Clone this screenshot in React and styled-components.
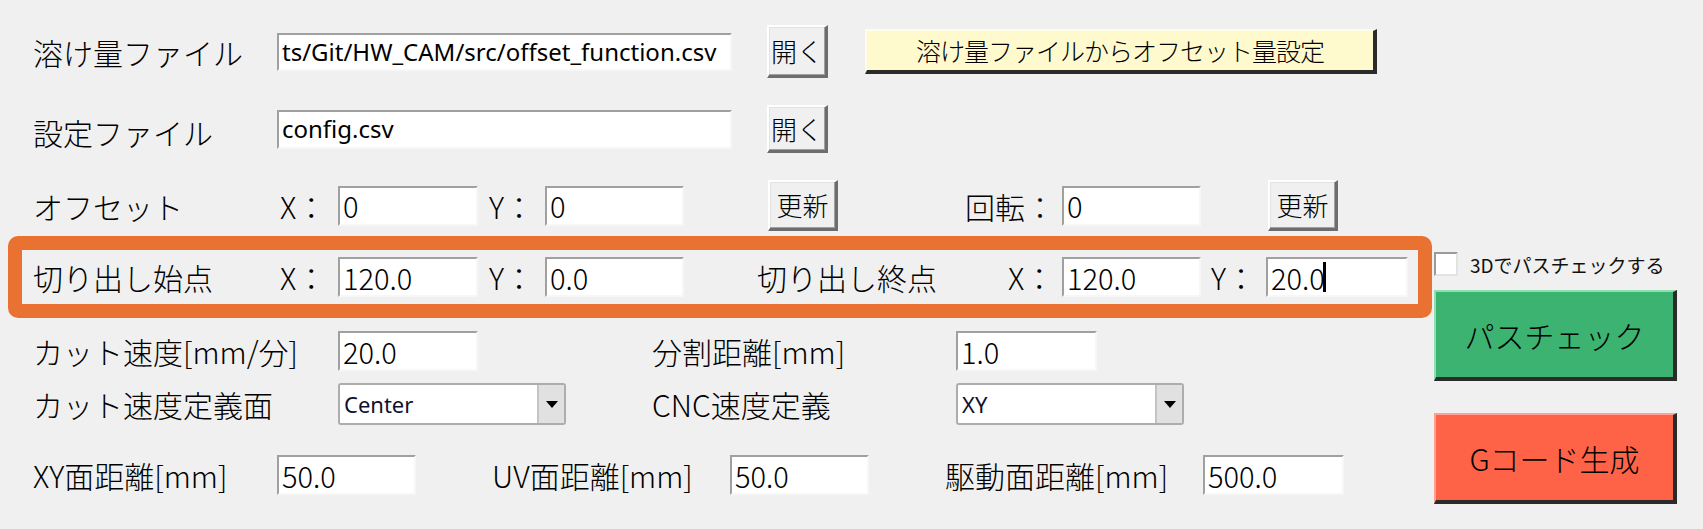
import styled, { createGlobalStyle } from 'styled-components';

const GlobalStyle = createGlobalStyle`
  html, body {
    margin: 0;
    padding: 0;
    background: #f0f0f0;
  }
  * {
    box-sizing: border-box;
  }
`;

const jp = `"Noto Sans CJK JP", "Noto Sans", sans-serif`;
const ui = `"Noto Sans", "Open Sans", "Noto Sans CJK JP", sans-serif`;

const Page = styled.div`
  display: flex;
  width: 1703px;
  height: 529px;
  background: #f0f0f0;
  overflow: hidden;
  font-family: ${jp};
  font-weight: 300;
  color: #000;
`;

const LeftPane = styled.div`
  width: 1432px;
  display: flex;
  flex-direction: column;
`;

const RightPane = styled.div`
  width: 243px;
  margin-left: 2px;
  padding-top: 252px;
  display: flex;
  flex-direction: column;
`;

const Row = styled.div`
  display: flex;
  align-items: center;
  height: ${(p) => p.$h}px;
  margin-top: ${(p) => p.$mt || 0}px;
  padding-left: ${(p) => (p.$pl === undefined ? 33 : p.$pl)}px;
  flex-shrink: 0;
`;

const Label = styled.div`
  width: ${(p) => p.$w}px;
  margin-left: ${(p) => p.$ml || 0}px;
  margin-top: ${(p) => p.$dy || 0}px;
  font-size: 30px;
  line-height: 1;
  white-space: nowrap;
  flex-shrink: 0;
`;

const TextBox = styled.div`
  width: ${(p) => p.$w}px;
  height: ${(p) => p.$h || 40}px;
  margin-left: ${(p) => p.$ml || 0}px;
  background: #fff;
  border-top: 2px solid #a0a0a0;
  border-left: 2px solid #a0a0a0;
  border-right: 2px solid #f7f7f7;
  border-bottom: 2px solid #f7f7f7;
  padding-left: 3px;
  display: flex;
  align-items: center;
  font-family: ${(p) => (p.$path ? ui : jp)};
  font-weight: ${(p) => (p.$path ? 400 : 300)};
  font-size: ${(p) => (p.$path ? 24 : 29)}px;
  line-height: 1;
  white-space: nowrap;
  overflow: hidden;
  flex-shrink: 0;
`;

const Caret = styled.span`
  display: inline-block;
  width: 3px;
  height: 30px;
  background: #000;
  margin-left: -2px;
`;

const SysButton = styled.div`
  width: ${(p) => p.$w}px;
  height: ${(p) => p.$h}px;
  margin-left: ${(p) => p.$ml || 0}px;
  background: #f0f0f0;
  border-style: solid;
  border-width: 2px 3px 3px 2px;
  border-color: #ffffff #6d6d6d #6d6d6d #ffffff;
  box-shadow: inset -1px -1px 0 #a0a0a0, inset 1px 1px 0 #e3e3e3;
  display: flex;
  align-items: center;
  justify-content: center;
  font-size: 26px;
  line-height: 1;
  flex-shrink: 0;
`;

const ColorButton = styled.div`
  width: ${(p) => p.$w}px;
  height: ${(p) => p.$h}px;
  margin-left: ${(p) => p.$ml || 0}px;
  margin-top: ${(p) => p.$mt || 0}px;
  background: ${(p) => p.$bg};
  border-style: solid;
  border-width: 2px 4px 4px 2px;
  border-color: ${(p) => p.$light} #2b2b2b #2b2b2b ${(p) => p.$light};
  display: flex;
  align-items: center;
  justify-content: center;
  font-size: ${(p) => p.$fs}px;
  letter-spacing: ${(p) => p.$ls || 0}px;
  line-height: 1;
  white-space: nowrap;
  flex-shrink: 0;
`;

const OrangeBox = styled.div`
  width: 1424px;
  height: 82px;
  margin-left: 8px;
  margin-top: 5px;
  border: 14px solid #e97132;
  border-radius: 10px;
  display: flex;
  align-items: center;
  flex-shrink: 0;
`;

const Combo = styled.div`
  width: ${(p) => p.$w}px;
  height: 42px;
  margin-left: ${(p) => p.$ml || 0}px;
  background: #fff;
  border: 2px solid #adadad;
  border-radius: 3px;
  display: flex;
  align-items: stretch;
  flex-shrink: 0;
`;

const ComboText = styled.div`
  flex: 1;
  display: flex;
  align-items: center;
  padding-left: 4px;
  font-family: ${ui};
  font-weight: 400;
  font-size: 22px;
  color: #101030;
`;

const ComboArrow = styled.div`
  width: 27px;
  background: #e1e1e1;
  border-left: 2px solid #c4c4c4;
  display: flex;
  align-items: center;
  justify-content: center;
`;

const CheckRow = styled.div`
  display: flex;
  align-items: center;
  height: 24px;
`;

const CheckBox = styled.div`
  width: 24px;
  height: 24px;
  background: #fff;
  border-top: 2px solid #9a9a9a;
  border-left: 2px solid #9a9a9a;
  border-right: 2px solid #e3e3e3;
  border-bottom: 2px solid #e3e3e3;
`;

const CheckLabel = styled.div`
  margin-left: 12px;
  font-size: 19px;
  font-weight: 400;
  line-height: 1;
  white-space: nowrap;
  color: #111;
`;

const Arrow = () => (
  <svg width="12" height="7" viewBox="0 0 12 7">
    <polygon points="0,0 12,0 6,7" fill="#000" />
  </svg>
);

const App = () => {
  return (
    <>
      <GlobalStyle />
      <Page>
        <LeftPane>
          <Row $h={53} $mt={25}>
            <Label $w={244}>溶け量ファイル</Label>
            <TextBox $w={455} $h={38} $path>ts/Git/HW_CAM/src/offset_function.csv</TextBox>
            <SysButton $w={61} $h={53} $ml={35}>開く</SysButton>
            <ColorButton $w={512} $h={45} $ml={37} $bg="#fffacd" $light="#fffde8" $fs={25} $ls={-1}>
              溶け量ファイルからオフセット量設定
            </ColorButton>
          </Row>

          <Row $h={48} $mt={27}>
            <Label $w={244} $dy={6}>設定ファイル</Label>
            <TextBox $w={455} $h={39} $path>config.csv</TextBox>
            <SysButton $w={61} $h={48} $ml={35}>開く</SysButton>
          </Row>

          <Row $h={51} $mt={27}>
            <Label $w={247}>オフセット</Label>
            <Label $w={58}>X：</Label>
            <TextBox $w={140}>0</TextBox>
            <Label $w={56} $ml={11}>Y：</Label>
            <TextBox $w={139}>0</TextBox>
            <SysButton $w={70} $h={51} $ml={84}>更新</SysButton>
            <Label $w={97} $ml={127}>回転：</Label>
            <TextBox $w={139}>0</TextBox>
            <SysButton $w={70} $h={51} $ml={67}>更新</SysButton>
          </Row>

          <OrangeBox>
            <Row $h={54} $pl={11}>
              <Label $w={247}>切り出し始点</Label>
              <Label $w={58}>X：</Label>
              <TextBox $w={140}>120.0</TextBox>
              <Label $w={56} $ml={11}>Y：</Label>
              <TextBox $w={139}>0.0</TextBox>
              <Label $w={251} $ml={73}>切り出し終点</Label>
              <Label $w={54}>X：</Label>
              <TextBox $w={139}>120.0</TextBox>
              <Label $w={55} $ml={10}>Y：</Label>
              <TextBox $w={142}>
                20.0<Caret />
              </TextBox>
            </Row>
          </OrangeBox>

          <Row $h={40} $mt={13}>
            <Label $w={305}>カット速度[mm/分]</Label>
            <TextBox $w={140}>20.0</TextBox>
            <Label $w={304} $ml={174}>分割距離[mm]</Label>
            <TextBox $w={141}>1.0</TextBox>
          </Row>

          <Row $h={42} $mt={12}>
            <Label $w={305}>カット速度定義面</Label>
            <Combo $w={228}>
              <ComboText>Center</ComboText>
              <ComboArrow>
                <Arrow />
              </ComboArrow>
            </Combo>
            <Label $w={304} $ml={86}>CNC速度定義</Label>
            <Combo $w={228}>
              <ComboText>XY</ComboText>
              <ComboArrow>
                <Arrow />
              </ComboArrow>
            </Combo>
          </Row>

          <Row $h={40} $mt={30}>
            <Label $w={244}>XY面距離[mm]</Label>
            <TextBox $w={139}>50.0</TextBox>
            <Label $w={238} $ml={76}>UV面距離[mm]</Label>
            <TextBox $w={139}>50.0</TextBox>
            <Label $w={258} $ml={76}>駆動面距離[mm]</Label>
            <TextBox $w={141}>500.0</TextBox>
          </Row>
        </LeftPane>

        <RightPane>
          <CheckRow>
            <CheckBox />
            <CheckLabel>3Dでパスチェックする</CheckLabel>
          </CheckRow>
          <ColorButton $w={243} $h={91} $mt={14} $bg="#3cb371" $light="#8fe0b0" $fs={30}>
            パスチェック
          </ColorButton>
          <ColorButton $w={243} $h={91} $mt={32} $bg="#ff6347" $light="#ffa090" $fs={30}>
            Gコード生成
          </ColorButton>
        </RightPane>
      </Page>
    </>
  );
};

export default App;
